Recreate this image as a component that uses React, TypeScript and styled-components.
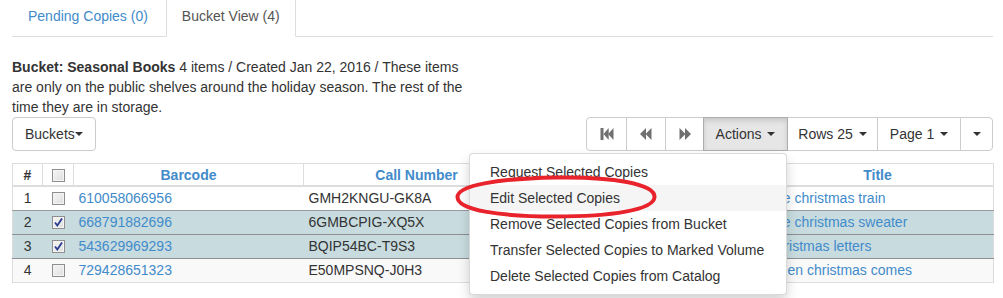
import React from "react";
import styled, { createGlobalStyle, css } from "styled-components";

const GlobalStyle = createGlobalStyle`
  html, body { margin: 0; padding: 0; background: #fff; }
  html { height: 100%; }
  body {
    min-height: 298px;
    height: 298px;
    overflow: hidden;
    font-family: "Liberation Sans", Arial, sans-serif;
    font-size: 14px;
    line-height: 20px;
    color: #333;
  }
  * { box-sizing: border-box; }
`;

const Page = styled.div`
  margin-top: -5px;
  min-height: 303px;
  padding: 0 10px 0 12px;
  position: relative;
`;

const TabList = styled.ul`
  list-style: none;
  margin: 0;
  padding: 0;
  display: flex;
  border-bottom: 1px solid #ddd;
`;

const Tab = styled.li<{ $active?: boolean }>`
  margin-bottom: -1px;
  margin-right: 2px;
  padding: 10px 15px;
  line-height: 20px;
  border: 1px solid transparent;
  border-radius: 4px 4px 0 0;
  color: #428bca;
  ${(p) =>
    p.$active &&
    css`
      color: #555;
      background: #fff;
      border-color: #ddd;
      border-bottom-color: transparent;
    `}
`;

const Description = styled.p`
  width: 466px;
  margin: 20px 0 0;
  line-height: 20px;
`;

const Toolbar = styled.div`
  display: flex;
  justify-content: space-between;
  align-items: flex-start;
`;

const Button = styled.button<{ $active?: boolean; $width?: number }>`
  font-family: inherit;
  font-size: 14px;
  line-height: 20px;
  height: 34px;
  padding: 6px 12px;
  color: #333;
  background: #fff;
  border: 1px solid #ccc;
  border-radius: 4px;
  display: inline-flex;
  align-items: center;
  justify-content: center;
  white-space: pre;
  cursor: pointer;
  ${(p) =>
    p.$width &&
    css`
      width: ${p.$width}px;
      padding: 6px 0;
    `}
  ${(p) =>
    p.$active &&
    css`
      background: #e6e6e6;
      border-color: #adadad;
      box-shadow: inset 0 3px 5px rgba(0, 0, 0, 0.125);
    `}
`;

const Group = styled.div`
  display: flex;
  & > * {
    margin-left: -1px;
  }
  & > *:first-child {
    margin-left: 0;
  }
  & > * > ${Button}, & > ${Button} {
    border-radius: 0;
  }
  & > ${Button}:first-child {
    border-radius: 4px 0 0 4px;
  }
  & > ${Button}:last-child {
    border-radius: 0 4px 4px 0;
  }
`;

const DropWrap = styled.div`
  position: relative;
  display: flex;
`;

const Caret = styled.span<{ $gap?: boolean }>`
  display: inline-block;
  width: 0;
  height: 0;
  margin-left: ${(p) => (p.$gap ? "2px" : "0")};
  border-top: 4px solid #333;
  border-left: 4px solid transparent;
  border-right: 4px solid transparent;
  vertical-align: middle;
`;

const Menu = styled.ul`
  position: absolute;
  top: calc(100% + 2px);
  right: 1px;
  z-index: 10;
  min-width: 318px;
  list-style: none;
  margin: 0;
  padding: 5px 0;
  background: #fff;
  border: 1px solid rgba(0, 0, 0, 0.15);
  border-radius: 4px;
  box-shadow: 0 6px 12px rgba(0, 0, 0, 0.175);
`;

const MenuItem = styled.li<{ $hover?: boolean }>`
  padding: 3px 20px;
  line-height: 20px;
  white-space: nowrap;
  color: #333;
  background: ${(p) => (p.$hover ? "#f5f5f5" : "transparent")};
`;

const Circle = styled.svg`
  position: absolute;
  left: -15px;
  top: 22px;
  width: 202px;
  height: 42px;
  overflow: visible;
  pointer-events: none;
`;

const Table = styled.table`
  width: 100%;
  margin-top: 12px;
  border-collapse: collapse;
  table-layout: fixed;
  border: 1px solid #ddd;
`;

const Th = styled.th<{ $link?: boolean }>`
  padding: 1px 5px 0;
  line-height: 20px;
  font-weight: bold;
  text-align: center;
  border: 1px solid #ddd;
  border-bottom: 2px solid #ddd;
  color: ${(p) => (p.$link ? "#428bca" : "#333")};
`;

const Row = styled.tr<{ $selected?: boolean; $striped?: boolean }>`
  background: ${(p) => (p.$selected ? "#c8dcdf" : p.$striped ? "#f9f9f9" : "#fff")};
  & > td {
    border-top: 1px solid ${(p) => (p.$selected ? "#9a9a9a" : "#ddd")};
  }
  ${(p) =>
    p.$selected &&
    css`
      & + tr > td {
        border-top-color: #8f8f8f;
      }
    `}
`;

const Td = styled.td<{ $center?: boolean; $link?: boolean }>`
  padding: 1px 5px 2px;
  line-height: 20px;
  white-space: nowrap;
  overflow: hidden;
  text-align: ${(p) => (p.$center ? "center" : "left")};
  color: ${(p) => (p.$link ? "#428bca" : "#333")};
`;

const Box = styled.span`
  display: inline-flex;
  align-items: center;
  justify-content: center;
  width: 13px;
  height: 13px;
  vertical-align: middle;
  margin-top: -2px;
  border: 1px solid #8e8e8e;
  background: linear-gradient(135deg, #f6f6f6 0%, #dedede 100%);
  box-shadow: inset 0 0 0 1px #f4f4f4;
`;

const Check = ({ checked }: { checked?: boolean }) => (
  <Box>
    {checked && (
      <svg width="11" height="11" viewBox="0 0 11 11">
        <path d="M2 5.5 L4.3 8.5 L9 1.5" fill="none" stroke="#2a3b8f" strokeWidth="1.8" />
      </svg>
    )}
  </Box>
);

const Icon = ({ kind }: { kind: "first" | "prev" | "next" }) => {
  const color = "#707070";
  let shapes: React.ReactNode;
  if (kind === "first") {
    shapes = (
      <>
        <rect x="0.5" y="1" width="3" height="12" fill={color} />
        <polygon points="3.5,7 8.7,1 8.7,13" fill={color} />
        <polygon points="8.2,7 13.5,1 13.5,13" fill={color} />
      </>
    );
  } else if (kind === "prev") {
    shapes = (
      <>
        <polygon points="1,7 7,1 7,13" fill={color} />
        <polygon points="6.5,7 12.5,1 12.5,13" fill={color} />
      </>
    );
  } else {
    shapes = (
      <>
        <polygon points="1.5,1 7.5,7 1.5,13" fill={color} />
        <polygon points="7,1 13,7 7,13" fill={color} />
      </>
    );
  }
  return (
    <svg width="14" height="14" viewBox="0 0 14 14">
      {shapes}
    </svg>
  );
};

const rows = [
  { n: 1, barcode: "610058066956", call: "GMH2KNGU-GK8A", loc: "Stacks", title: "The christmas train", sel: false },
  { n: 2, barcode: "668791882696", call: "6GMBCPIG-XQ5X", loc: "Stacks", title: "The christmas sweater", sel: true },
  { n: 3, barcode: "543629969293", call: "BQIP54BC-T9S3", loc: "Stacks", title: "Christmas letters", sel: true },
  { n: 4, barcode: "729428651323", call: "E50MPSNQ-J0H3", loc: "Stacks", title: "When christmas comes", sel: false },
];

const actions = [
  "Request Selected Copies",
  "Edit Selected Copies",
  "Remove Selected Copies from Bucket",
  "Transfer Selected Copies to Marked Volume",
  "Delete Selected Copies from Catalog",
];

export default function App() {
  return (
    <>
      <GlobalStyle />
      <Page>
        <TabList>
          <Tab>Pending Copies (0)</Tab>
          <Tab $active>Bucket View (4)</Tab>
        </TabList>
        <Description>
          <strong>Bucket: Seasonal Books</strong> 4 items / Created Jan 22, 2016 / These items are
          only on the public shelves around the holiday season. The rest of the time they are in
          storage.
        </Description>
        <Toolbar>
          <Button>
            Buckets<Caret />
          </Button>
          <Group>
            <Button $width={41}>
              <Icon kind="first" />
            </Button>
            <Button $width={40}>
              <Icon kind="prev" />
            </Button>
            <Button $width={39}>
              <Icon kind="next" />
            </Button>
            <DropWrap>
              <Button $active $width={85}>
                Actions <Caret $gap />
              </Button>
              <Menu>
                {actions.map((a, i) => (
                  <MenuItem key={a} $hover={i === 1}>
                    {a}
                  </MenuItem>
                ))}
                <Circle viewBox="0 0 202 42">
                  <path
                    d="M101 1.5 C158 0.5 200 8 199.5 21 C199 34 156 40.5 100 40.5 C44 40.5 2.5 34 2.5 21 C2.5 9 45 2.5 101 1.5 Z"
                    fill="none"
                    stroke="#e8232b"
                    strokeWidth="4"
                  />
                </Circle>
              </Menu>
            </DropWrap>
            <Button $width={91}>
              Rows 25 <Caret $gap />
            </Button>
            <Button $width={84}>
              Page 1 <Caret $gap />
            </Button>
            <Button $width={33}>
              <Caret />
            </Button>
          </Group>
        </Toolbar>
        <Table>
          <colgroup>
            <col style={{ width: 30 }} />
            <col style={{ width: 31 }} />
            <col style={{ width: 230 }} />
            <col style={{ width: 226 }} />
            <col style={{ width: 232 }} />
            <col style={{ width: 232 }} />
          </colgroup>
          <thead>
            <tr>
              <Th>#</Th>
              <Th>
                <Check />
              </Th>
              <Th $link>Barcode</Th>
              <Th $link>Call Number</Th>
              <Th $link>Location</Th>
              <Th $link>Title</Th>
            </tr>
          </thead>
          <tbody>
            {rows.map((r) => (
              <Row key={r.n} $selected={r.sel} $striped={r.n % 2 === 0}>
                <Td $center>{r.n}</Td>
                <Td $center>
                  <Check checked={r.sel} />
                </Td>
                <Td $link>{r.barcode}</Td>
                <Td>{r.call}</Td>
                <Td>{r.loc}</Td>
                <Td $link>{r.title}</Td>
              </Row>
            ))}
          </tbody>
        </Table>
      </Page>
    </>
  );
}
